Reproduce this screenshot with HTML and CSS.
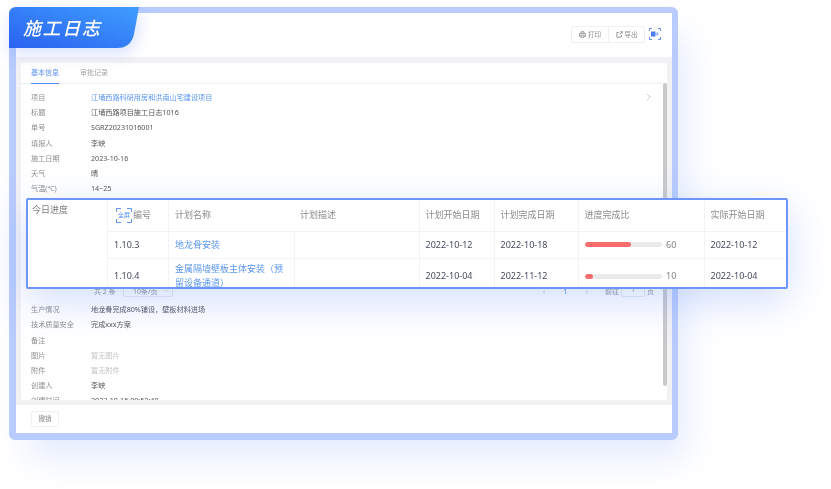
FILE: index.html
```html
<!DOCTYPE html>
<html lang="zh-CN">

<head>
    <meta charset="UTF-8">
    <title>施工日志</title>
    <link rel="stylesheet" href="styles.css">
</head>

<body>
    <div class="stage">
        <!-- 主窗口 -->
        <div class="window">
            <div class="head">
                <div class="btn_group">
                    <span class="btn_item">
                        <svg class="btn_icon" viewBox="0 0 10 10"><path d="M3 3.500V1h4v2.500"/><path d="M2.500 7.500H.8V3.500h8.400v4H7.500"/><path d="M2.800 6h4.400v3H2.800z"/></svg>打印
                    </span>
                    <span class="btn_item">
                        <svg class="btn_icon" viewBox="0 0 10 10"><path d="M4.500 2.200H1.200v6.600h6.600V5.500"/><path d="M6 1h3v3"/><path d="M9 1L5 5"/></svg>导出
                    </span>
                </div>
                <svg class="scan_icon" viewBox="0 0 12 12">
                    <path class="corner" d="M.5 3V.5H3M9 .5h2.500V3M11.500 9v2.500H9M3 11.500H.5V9"/>
                    <rect class="scan_left" x="2" y="3.500" width="4.500" height="5"/>
                    <path class="scan_right" d="M8 3.800L10.200 6 8 8.200 6.500 6z"/>
                </svg>
            </div>

            <div class="main">
                <div class="card">
                    <div class="tabs">
                        <span class="tab active">基本信息</span>
                        <span class="tab">审批记录</span>
                    </div>
                    <div class="list">
                        <div class="row"><span class="key">项目</span><span class="val link">江埇西路科研用房和洪南山宅建设项目</span>
                            <svg class="row_arrow" viewBox="0 0 6 10"><path d="M1 1l4 4-4 4"/></svg>
                        </div>
                        <div class="row"><span class="key">标题</span><span class="val">江埇西路项目施工日志1016</span></div>
                        <div class="row"><span class="key">单号</span><span class="val">SGRZ20231016001</span></div>
                        <div class="row"><span class="key">填报人</span><span class="val">李峡</span></div>
                        <div class="row"><span class="key">施工日期</span><span class="val">2023-10-16</span></div>
                        <div class="row"><span class="key">天气</span><span class="val">晴</span></div>
                        <div class="row"><span class="key">气温(℃)</span><span class="val">14~25</span></div>
                        <!-- 今日进度，表格由上层面板放大显示 -->
                        <div class="today">
                            <div class="pager">
                                <span class="total">共 2 条</span>
                                <span class="size">10条/页
                                    <svg class="size_arrow" viewBox="0 0 8 5"><path d="M1 1l3 3 3-3"/></svg>
                                </span>
                                <span class="pages">
                                    <span>‹</span><span class="cur">1</span><span>›</span>
                                </span>
                                <span class="jump">前往<span class="jump_box">1</span>页</span>
                            </div>
                        </div>
                        <div class="row"><span class="key">生产情况</span><span class="val">地龙骨完成80%铺设，壁板材料进场</span></div>
                        <div class="row"><span class="key">技术质量安全</span><span class="val">完成xxx方案</span></div>
                        <div class="row"><span class="key">备注</span><span class="val"></span></div>
                        <div class="row"><span class="key">图片</span><span class="val none">暂无图片</span></div>
                        <div class="row"><span class="key">附件</span><span class="val none">暂无附件</span></div>
                        <div class="row"><span class="key">创建人</span><span class="val">李峡</span></div>
                        <div class="row"><span class="key">创建时间</span><span class="val">2023-10-16 09:52:40</span></div>
                    </div>
                    <div class="scroll"></div>
                </div>
            </div>

            <div class="foot">
                <span class="back_btn">撤销</span>
            </div>
        </div>

        <!-- 左上角标题 -->
        <div class="title">
            <svg class="title_bg" viewBox="0 0 130 41">
                <defs>
                    <linearGradient id="titleFill" x1="0" y1="1" x2="1" y2="0">
                        <stop offset="0" stop-color="#2a62f0"/>
                        <stop offset="1" stop-color="#3f9dff"/>
                    </linearGradient>
                </defs>
                <path fill="url(#titleFill)" d="M8 0H130L125 27Q122 41 108 41H0V8Q0 0 8 0z"/>
            </svg>
            <span class="title_text">施工日志</span>
        </div>

        <!-- 今日进度面板 -->
        <div class="panel">
            <div class="panel_key">今日进度</div>
            <table class="plan">
                <colgroup>
                    <col class="c1"><col class="c2"><col class="c3"><col class="c4"><col class="c5"><col class="c6"><col class="c7">
                </colgroup>
                <tr>
                    <th class="num_head">
                        <span class="full_icon">
                            <svg viewBox="0 0 16 15"><path d="M.5 4V.5H5M11 .5h4.500V4M15.500 11v3.500H11M5 14.500H.5V11"/></svg>
                            <span class="full_text">全屏</span>
                        </span>编号
                    </th>
                    <th class="no_line plan_name">计划名称</th>
                    <th>计划描述</th>
                    <th>计划开始日期</th>
                    <th>计划完成日期</th>
                    <th>进度完成比</th>
                    <th>实际开始日期</th>
                </tr>
                <tr>
                    <td>1.10.3</td>
                    <td class="plan_name plan_link">地龙骨安装</td>
                    <td></td>
                    <td>2022-10-12</td>
                    <td>2022-10-18</td>
                    <td>
                        <div class="rate"><div class="bar"><div class="bar_fill" style="width: 60%;"></div></div>60</div>
                    </td>
                    <td>2022-10-12</td>
                </tr>
                <tr>
                    <td>1.10.4</td>
                    <td class="plan_name plan_link">金属隔墙壁板主体安装（预留设备通道）</td>
                    <td></td>
                    <td>2022-10-04</td>
                    <td>2022-11-12</td>
                    <td>
                        <div class="rate"><div class="bar"><div class="bar_fill" style="width: 10%;"></div></div>10</div>
                    </td>
                    <td>2022-10-04</td>
                </tr>
            </table>
        </div>
    </div>
</body>

</html>
```

FILE: styles.css
```css
* {
    box-sizing: border-box;
}

body {
    margin: 0;
    background-color: white;
    font-family: "Noto Sans", "Noto Sans CJK SC", sans-serif;
}

.stage {
    position: relative;
    width: 831px;
    height: 489px;
    padding: 7px 0 0 9px;
    overflow: hidden;
    filter: blur(0.45px);
}

.window {
    display: flex;
    flex-direction: column;
    width: 669px;
    height: 433px;
    border: solid #b9cbff;
    border-width: 6px 6px 7px 7px;
    border-radius: 6px;
    background-color: white;
    box-shadow: 14px 24px 32px -6px rgba(120, 155, 245, 0.2);
}

/* 顶部按钮 */
.head {
    display: flex;
    flex: none;
    align-items: center;
    justify-content: flex-end;
    height: 44px;
    padding: 0 11px 2px 0;
    gap: 4px;
}

.btn_group {
    display: flex;
    height: 17px;
    border: 1px solid #f0f0f0;
    border-radius: 2px;
}

.btn_item {
    display: flex;
    align-items: center;
    justify-content: center;
    gap: 2px;
    width: 36px;
    font-size: 6.500px;
    color: #8a8a8a;
}

.btn_item + .btn_item {
    border-left: 1px solid #f0f0f0;
}

.btn_icon {
    width: 7px;
    height: 7px;
    fill: none;
    stroke: #777777;
    stroke-width: 1;
}

.scan_icon {
    width: 12px;
    height: 12px;
}

.corner {
    fill: none;
    stroke: #5d8df5;
    stroke-width: 1;
}

.scan_left {
    fill: #4a7cee;
}

.scan_right {
    fill: #a9c4fb;
}

/* 内容区 */
.main {
    flex: 1;
    min-height: 0;
    padding: 6px 5px 5px;
    background-color: #f2f2f4;
}

.card {
    position: relative;
    height: 100%;
    overflow: hidden;
    border-radius: 2px;
    background-color: white;
}

.tabs {
    display: flex;
    gap: 21px;
    height: 21px;
    padding-left: 10px;
    border-bottom: 1px solid #eceef5;
}

.tab {
    height: 21px;
    font-size: 7px;
    line-height: 20px;
    color: #a3a3a3;
}

.active {
    color: #5b8ff0;
    border-bottom: 1px solid #4c8cf5;
}

.list {
    padding: 5.400px 0 0 10px;
}

.row {
    display: flex;
    align-items: center;
    height: 15.200px;
    font-size: 7.150px;
}

.key {
    flex: none;
    width: 60px;
    color: #8f8f8f;
}

.val {
    color: #555555;
}

.link {
    color: #5a96ee;
}

.none {
    color: #c4c4c4;
}

.row_arrow {
    width: 5px;
    height: 8px;
    margin-left: auto;
    margin-right: 16px;
    fill: none;
    stroke: #bdbdbd;
    stroke-width: 1;
}

.today {
    display: flex;
    align-items: flex-end;
    height: 106px;
    padding-bottom: 4.600px;
    font-size: 7px;
    color: #8f8f8f;
}

.pager {
    display: flex;
    align-items: center;
    width: 100%;
    height: 12px;
    padding-left: 63px;
}

.total {
    width: 29px;
}

.size {
    display: flex;
    align-items: center;
    justify-content: space-between;
    width: 50px;
    height: 12px;
    padding: 0 3px 0 9px;
    border: 1px solid #e8e8ee;
    border-top: none;
    border-radius: 2px;
}

.size_arrow {
    width: 5px;
    height: 3px;
    fill: none;
    stroke: #c4c4c4;
    stroke-width: 1;
}

.pages {
    display: flex;
    justify-content: space-between;
    width: 45px;
    margin-left: 370px;
    color: #b5b5b5;
}

.cur {
    color: #4c8cf5;
}

.jump {
    display: flex;
    align-items: center;
    gap: 2px;
    margin-left: 17px;
}

.jump_box {
    width: 24px;
    height: 12px;
    border: 1px solid #e3e8f2;
    border-top: none;
    border-radius: 2px;
    text-align: center;
}

.scroll {
    position: absolute;
    top: 20px;
    right: 0;
    width: 4px;
    height: 303px;
    border-radius: 2px;
    background-color: #c9c9c9;
}

.foot {
    display: flex;
    flex: none;
    align-items: center;
    height: 28px;
    padding-left: 15px;
}

.back_btn {
    width: 28px;
    height: 16px;
    border: 1px solid #f0f0f0;
    border-radius: 2px;
    font-size: 6.500px;
    line-height: 14px;
    text-align: center;
    color: #8a8a8a;
}

/* 标题 */
.title {
    position: absolute;
    top: 7px;
    left: 9px;
    width: 130px;
    height: 41px;
    padding: 8px 0 0 14px;
    filter: drop-shadow(2px 6px 8px rgba(80, 125, 240, 0.22));
}

.title_bg {
    position: absolute;
    top: 0;
    left: 0;
    width: 130px;
    height: 41px;
}

.title_text {
    position: relative;
    display: block;
    font-family: "Noto Sans CJK SC", sans-serif;
    font-size: 18px;
    font-style: italic;
    font-weight: 500;
    line-height: 25px;
    letter-spacing: 1.600px;
    color: white;
}

/* 今日进度面板 */
.panel {
    position: absolute;
    top: 198px;
    left: 26px;
    display: flex;
    width: 762px;
    height: 91px;
    overflow: hidden;
    border: 2px solid #6f95fb;
    border-radius: 2px;
    background-color: white;
    box-shadow: 0 12px 40px rgba(95, 135, 250, 0.28);
}

.panel_key {
    flex: none;
    width: 79px;
    padding: 3px 0 0 4px;
    font-size: 9px;
    line-height: 14px;
    color: #7d7d7d;
}

.plan {
    flex: none;
    width: 679px;
    height: 0;
    border-collapse: collapse;
    table-layout: fixed;
    font-size: 9px;
}

.c1 { width: 61px; }
.c2 { width: 126px; }
.c3 { width: 125px; }
.c4 { width: 75px; }
.c5 { width: 84px; }
.c6 { width: 126px; }
.c7 { width: 82px; }

th,
td {
    padding: 0 5px 0 6px;
    border: 1px solid #f2f3f7;
    font-weight: normal;
    line-height: 14px;
    text-align: left;
    color: #454a60;
}

th:nth-child(n+3),
td:nth-child(n+3) {
    padding-left: 5.500px;
}

td:nth-child(6) {
    padding-left: 6px;
}

th {
    height: 31px;
    border-top: none;
    color: #8c8c8c;
}

tr:nth-child(2) td {
    height: 27px;
}

tr:nth-child(3) td {
    height: 36px;
}

.no_line {
    border-right: none;
}

.no_line + th {
    border-left: none;
}

.num_head {
    padding-left: 8px;
    white-space: nowrap;
}

.full_icon {
    position: relative;
    display: inline-block;
    width: 17px;
    height: 15px;
    vertical-align: middle;
}

.full_icon svg {
    position: absolute;
    top: 0;
    left: 0;
    width: 16px;
    height: 15px;
    fill: none;
    stroke: #5f94f5;
    stroke-width: 1;
}

.full_text {
    position: absolute;
    top: 3px;
    left: 2px;
    font-size: 6px;
    line-height: 8px;
    color: #4c8cf5;
}

td.plan_link {
    color: #5a96ee;
}

.rate {
    display: flex;
    align-items: center;
    gap: 4px;
    color: #808080;
}

.bar {
    width: 77px;
    height: 5px;
    overflow: hidden;
    border-radius: 3px;
    background-color: #ebebeb;
}

.bar_fill {
    height: 100%;
    border-radius: 3px;
    background-color: #f76c6c;
}
```
